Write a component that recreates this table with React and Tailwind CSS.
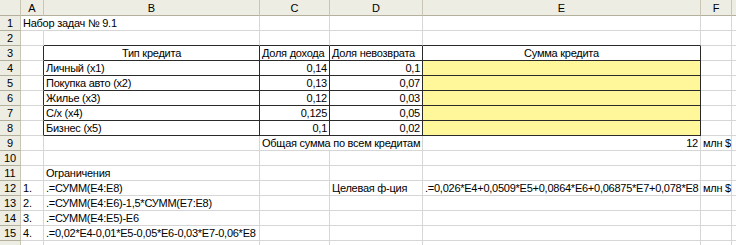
const COLS = ["A", "B", "C", "D", "E", "F", ""];

const Hdr = ({ children, right = true }) => (
  <div
    className={`flex items-center justify-center bg-[#eeede3] border-b border-b-[#b3b09e] ${
      right ? "border-r border-r-[#c9c6b4]" : ""
    } text-[11px] leading-[14px] text-black`}
  >
    {children}
  </div>
);

const Cell = ({
  children,
  span = false,
  align = "left",
  darkR = false,
  darkB = false,
  fill = false,
}) => (
  <div
    className={`flex items-center whitespace-nowrap px-[2px] text-[11px] leading-[14px] tracking-[-0.25px] text-black border-r border-b ${
      span ? "col-span-2" : ""
    } ${
      align === "right"
        ? "justify-end"
        : align === "center"
        ? "justify-center"
        : "justify-start"
    } ${darkR ? "border-r-[#2a2a2a]" : "border-r-[#d6d6d6]"} ${
      darkB ? "border-b-[#2a2a2a]" : "border-b-[#d6d6d6]"
    } ${fill ? "bg-[#fff799]" : "bg-white"}`}
  >
    {children}
  </div>
);

const credits = [
  ["Личный (x1)", "0,14", "0,1"],
  ["Покупка авто (x2)", "0,13", "0,07"],
  ["Жилье (x3)", "0,12", "0,03"],
  ["С/х (x4)", "0,125", "0,05"],
  ["Бизнес (x5)", "0,1", "0,02"],
];

const limits = [
  ".=СУММ(E4:E8)",
  ".=СУММ(E4:E6)-1,5*СУММ(E7:E8)",
  ".=СУММ(E4:E5)-E6",
  ".=0,02*E4-0,01*E5-0,05*E6-0,03*E7-0,06*E8",
];

const Blank = ({ n }) =>
  Array.from({ length: n }).map((_, i) => <Cell key={i} />);

export default function App() {
  return (
    <div
      className="h-[245px] w-[736px] overflow-hidden bg-white"
      style={{ fontFamily: '"Liberation Sans", Arial, sans-serif' }}
    >
      <div className="grid grid-cols-[21px_23px_216px_70px_93px_278px_31px_1fr] grid-rows-[16px_repeat(16,15px)]">
        {/* column headers */}
        <Hdr />
        {COLS.map((c, i) => (
          <Hdr key={i}>{c}</Hdr>
        ))}

        {/* 1 */}
        <Hdr>1</Hdr>
        <Cell span>Набор задач № 9.1</Cell>
        <Blank n={5} />

        {/* 2 */}
        <Hdr>2</Hdr>
        <Cell />
        <Cell darkB />
        <Cell darkB />
        <Cell darkB />
        <Cell darkB />
        <Blank n={2} />

        {/* 3 */}
        <Hdr>3</Hdr>
        <Cell darkR />
        <Cell align="center" darkR darkB>
          Тип кредита
        </Cell>
        <Cell darkR darkB>
          Доля дохода
        </Cell>
        <Cell darkR darkB>
          Доля невозврата
        </Cell>
        <Cell align="center" darkR darkB>
          Сумма кредита
        </Cell>
        <Blank n={2} />

        {/* 4-8 */}
        {credits.map(([name, inc, def], i) => [
          <Hdr key={`h${i}`}>{i + 4}</Hdr>,
          <Cell key={`a${i}`} darkR />,
          <Cell key={`b${i}`} darkR darkB>
            {name}
          </Cell>,
          <Cell key={`c${i}`} align="right" darkR darkB>
            {inc}
          </Cell>,
          <Cell key={`d${i}`} align="right" darkR darkB>
            {def}
          </Cell>,
          <Cell key={`e${i}`} darkR darkB fill />,
          <Cell key={`f${i}`} />,
          <Cell key={`g${i}`} />,
        ])}

        {/* 9 */}
        <Hdr>9</Hdr>
        <Cell />
        <Cell />
        <Cell span>Общая сумма по всем кредитам</Cell>
        <Cell align="right">12</Cell>
        <Cell>млн $</Cell>
        <Cell />

        {/* 10 */}
        <Hdr>10</Hdr>
        <Blank n={7} />

        {/* 11 */}
        <Hdr>11</Hdr>
        <Cell />
        <Cell>Ограничения</Cell>
        <Blank n={5} />

        {/* 12-15 */}
        {limits.map((f, i) => [
          <Hdr key={`h${i}`}>{i + 12}</Hdr>,
          <Cell key={`a${i}`}>{i + 1}.</Cell>,
          <Cell key={`b${i}`}>{f}</Cell>,
          <Cell key={`c${i}`} />,
          <Cell key={`d${i}`}>{i === 0 ? "Целевая ф-ция" : ""}</Cell>,
          <Cell key={`e${i}`}>
            {i === 0
              ? ".=0,026*E4+0,0509*E5+0,0864*E6+0,06875*E7+0,078*E8"
              : ""}
          </Cell>,
          <Cell key={`f${i}`}>{i === 0 ? "млн $" : ""}</Cell>,
          <Cell key={`g${i}`} />,
        ])}

        {/* 16 */}
        <Hdr />
        <Blank n={7} />
      </div>
    </div>
  );
}
